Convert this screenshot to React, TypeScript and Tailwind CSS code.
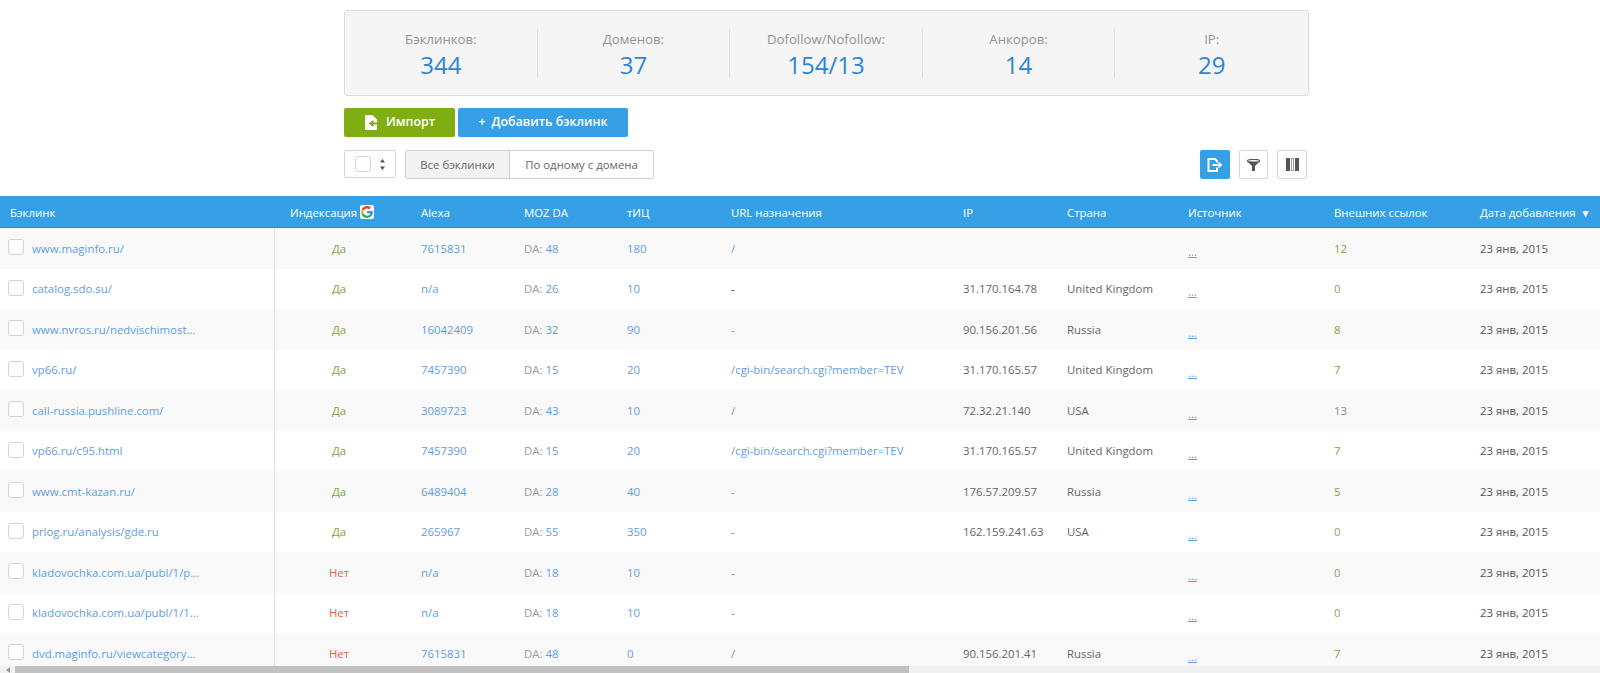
import React from 'react';

const FONT = "font-['Open_Sans','Noto_Sans',sans-serif]";
const GRID = 'grid grid-cols-[275px_146px_103px_103px_104px_232px_104px_121px_146px_146px_1fr]';
const LINK = 'text-[#5f9de2]';

const stats = [
  { label: 'Бэклинков:', value: '344' },
  { label: 'Доменов:', value: '37' },
  { label: 'Dofollow/Nofollow:', value: '154/13' },
  { label: 'Анкоров:', value: '14' },
  { label: 'IP:', value: '29' },
];

const rows = [
  ['www.maginfo.ru/', 'Да', '7615831', '48', '180', '/', '', '', '12'],
  ['catalog.sdo.su/', 'Да', 'n/a', '26', '10', '-', '31.170.164.78', 'United Kingdom', '0'],
  ['www.nvros.ru/nedvischimost...', 'Да', '16042409', '32', '90', '-', '90.156.201.56', 'Russia', '8'],
  ['vp66.ru/', 'Да', '7457390', '15', '20', '/cgi-bin/search.cgi?member=TEV', '31.170.165.57', 'United Kingdom', '7'],
  ['call-russia.pushline.com/', 'Да', '3089723', '43', '10', '/', '72.32.21.140', 'USA', '13'],
  ['vp66.ru/c95.html', 'Да', '7457390', '15', '20', '/cgi-bin/search.cgi?member=TEV', '31.170.165.57', 'United Kingdom', '7'],
  ['www.cmt-kazan.ru/', 'Да', '6489404', '28', '40', '-', '176.57.209.57', 'Russia', '5'],
  ['prlog.ru/analysis/gde.ru', 'Да', '265967', '55', '350', '-', '162.159.241.63', 'USA', '0'],
  ['kladovochka.com.ua/publ/1/p...', 'Нет', 'n/a', '18', '10', '-', '', '', '0'],
  ['kladovochka.com.ua/publ/1/1...', 'Нет', 'n/a', '18', '10', '-', '', '', '0'],
  ['dvd.maginfo.ru/viewcategory...', 'Нет', '7615831', '48', '0', '/', '90.156.201.41', 'Russia', '7'],
];

const headers = ['Alexa', 'MOZ DA', 'тИЦ', 'URL назначения', 'IP', 'Страна', 'Источник', 'Внешних ссылок'];

function countColor(n: string) {
  if (n === '0') return 'text-[#8f9f6f]';
  if (n === '13') return 'text-[#8a8a8a]';
  return 'text-[#7fa53a]';
}

function ImportIcon() {
  return (
    <svg width="12" height="15" viewBox="0 0 12 15">
      <path d="M1 0h6.500L12 4.500V14a1 1 0 0 1-1 1H1a1 1 0 0 1-1-1V1a1 1 0 0 1 1-1z" fill="#fff" />
      <path d="M12 8.500H6.500M8.500 6L5 8.500 8.500 11" stroke="#7fae12" strokeWidth="1.800" fill="none" />
    </svg>
  );
}

function ExportIcon() {
  return (
    <svg width="16" height="14" viewBox="0 0 16 14" fill="none">
      <path d="M10 4.500V3L8 1H1.500v12H10V9.500" stroke="#fff" strokeWidth="2" />
      <path d="M5.500 7h6" stroke="#fff" strokeWidth="2" />
      <path d="M11.500 3.500L15.500 7l-4 3.500z" fill="#fff" />
    </svg>
  );
}

function FunnelIcon() {
  return (
    <svg width="13" height="12" viewBox="0 0 13 12">
      <ellipse cx="6.500" cy="2" rx="6" ry="1.700" fill="none" stroke="#555" strokeWidth="1.200" />
      <path d="M.500 2.500h12L8 7v5H5V7z" fill="#555" />
    </svg>
  );
}

function ColumnsIcon() {
  return (
    <svg width="13" height="13" viewBox="0 0 13 13">
      <rect x="0" y="0" width="4" height="13" fill="#555" />
      <rect x="5.500" y="0.500" width="2" height="12" fill="#fff" stroke="#999" />
      <rect x="9" y="0" width="4" height="13" fill="#555" />
    </svg>
  );
}

function GoogleIcon() {
  return (
    <span className="ml-[3px] flex h-[14px] w-[14px] items-center justify-center rounded-[2px] bg-white">
      <svg width="12" height="12" viewBox="0 0 48 48">
        <path fill="#EA4335" d="M24 9.500c3.500 0 6.700 1.300 9.200 3.400l6.800-6.800C35.900 2.400 30.300 0 24 0 14.600 0 6.500 5.400 2.600 13.200l8 6.200C12.400 13.700 17.700 9.500 24 9.500z" />
        <path fill="#4285F4" d="M47 24.500c0-1.600-.1-3.100-.4-4.500H24v9h13c-.6 3-2.300 5.500-4.800 7.200l7.700 6C44.400 38 47 31.800 47 24.500z" />
        <path fill="#FBBC05" d="M10.600 28.600A14.500 14.500 0 0 1 10.600 19.400l-8-6.200a24 24 0 0 0 0 21.600z" />
        <path fill="#34A853" d="M24 48c6.500 0 11.900-2.100 15.900-5.800l-7.700-6c-2.200 1.400-4.900 2.300-8.200 2.300-6.300 0-11.600-4.200-13.400-9.900l-8 6.200C6.500 42.600 14.600 48 24 48z" />
      </svg>
    </span>
  );
}

export default function App() {
  return (
    <div className={`${FONT} flex h-[673px] w-full flex-col overflow-hidden bg-white text-[11.4px] text-[#666]`}>
      <div className="ml-[344px] mt-[10px] w-[965px]">
        <div className="flex h-[86px] items-center rounded-[3px] border border-[#dcdcdc] bg-[#f5f5f5]">
          {stats.map((s, i) => (
            <div
              key={s.label}
              className={`flex h-[49px] w-[193px] flex-col items-center ${i < 4 ? 'border-r border-[#e0e0e0]' : ''}`}
            >
              <span className="text-[13.2px] leading-[20px] text-[#949494]">{s.label}</span>
              <span className="text-[24px] leading-[32px] font-medium text-[#2a86d9]">{s.value}</span>
            </div>
          ))}
        </div>

        <div className="mt-[12px] flex h-[29px] gap-[3px] text-[12.4px] font-semibold text-white">
          <button className="flex w-[111px] items-center rounded-[2px] bg-[#7fae12] pl-[21px]">
            <ImportIcon />
            <span className="ml-[9px]">Импорт</span>
          </button>
          <button className="flex w-[170px] items-center justify-center rounded-[2px] bg-[#36a0e6]">
            <span className="mr-[6px]">+</span>Добавить бэклинк
          </button>
        </div>

        <div className="mt-[13px] flex h-[29px] items-start pr-[2px]">
          <div className="flex h-[28px] w-[52px] items-center rounded-[2px] border border-[#d5d5d5] pl-[10px]">
            <span className="h-[16px] w-[16px] rounded-[3px] border border-[#d5d5d5]" />
            <svg className="ml-[9px]" width="5" height="11" viewBox="0 0 5 11">
              <path d="M2.500 0L5 3.500H0zM2.500 11L0 7.500h5z" fill="#555" />
            </svg>
          </div>
          <div className="ml-[9px] flex h-[29px] w-[249px] rounded-[2px] border border-[#d0d0d0]">
            <div className="flex w-[104px] items-center justify-center border-r border-[#d0d0d0] bg-[#f2f2f2] text-[#666]">
              Все бэклинки
            </div>
            <div className="flex flex-1 items-center justify-center text-[#666]">По одному с домена</div>
          </div>
          <div className="ml-auto flex gap-[9px]">
            <button className="flex h-[29px] w-[30px] items-center justify-center rounded-[2px] bg-[#36a0e6]">
              <ExportIcon />
            </button>
            <button className="flex h-[29px] w-[29px] items-center justify-center rounded-[2px] border border-[#d5d5d5]">
              <FunnelIcon />
            </button>
            <button className="flex h-[29px] w-[30px] items-center justify-center rounded-[2px] border border-[#d5d5d5]">
              <ColumnsIcon />
            </button>
          </div>
        </div>
      </div>

      <div className="mt-[17px] min-h-0 flex-1 overflow-hidden">
        <div className={`${GRID} h-[32px] items-center border-b border-[#1f91de] bg-[#36a0e6] pt-[2px] text-white`}>
          <div className="pl-[10px]">Бэклинк</div>
          <div className="flex items-center pl-[15px]">
            Индексация
            <GoogleIcon />
          </div>
          {headers.map((h) => (
            <div key={h}>{h}</div>
          ))}
          <div>
            Дата добавления <span className="ml-[2px] text-[10px]">▼</span>
          </div>
        </div>

        {rows.map((r, i) => (
          <div key={i} className={`${GRID} h-[40.5px] items-center ${i % 2 === 0 ? 'bg-[#f9f9f9]' : 'bg-white'}`}>
            <div className="flex h-full items-center border-r border-[#e2e2e2] pl-[8px]">
              <span className="mb-[2px] h-[16px] w-[16px] rounded-[3px] border border-[#d5d5d5] bg-white" />
              <a className={`ml-[8px] whitespace-nowrap ${LINK}`}>{r[0]}</a>
            </div>
            <div className={`pr-[18px] text-center ${r[1] === 'Да' ? 'text-[#7fa53a]' : 'text-[#e0603f]'}`}>{r[1]}</div>
            <div className={LINK}>{r[2]}</div>
            <div className="text-[#999]">
              DA: <span className={LINK}>{r[3]}</span>
            </div>
            <div className={LINK}>{r[4]}</div>
            <div className={r[5] !== '-' ? LINK : i === 1 ? 'text-[#333]' : 'text-[#888]'}>{r[5]}</div>
            <div>{r[6]}</div>
            <div>{r[7]}</div>
            <div>
              <a className={`relative top-[3px] underline ${LINK}`}>...</a>
            </div>
            <div className={countColor(r[8])}>{r[8]}</div>
            <div className="whitespace-nowrap text-[#555]">23 янв, 2015</div>
          </div>
        ))}
      </div>

      <div className="flex h-[7px] shrink-0 items-center bg-[#f1f1f1]">
        <svg className="ml-[6px]" width="4" height="6" viewBox="0 0 4 6">
          <path d="M4 0v6L0 3z" fill="#9a9a9a" />
        </svg>
        <div className="ml-[5px] h-full w-[894px] bg-[#c1c1c1]" />
      </div>
    </div>
  );
}
